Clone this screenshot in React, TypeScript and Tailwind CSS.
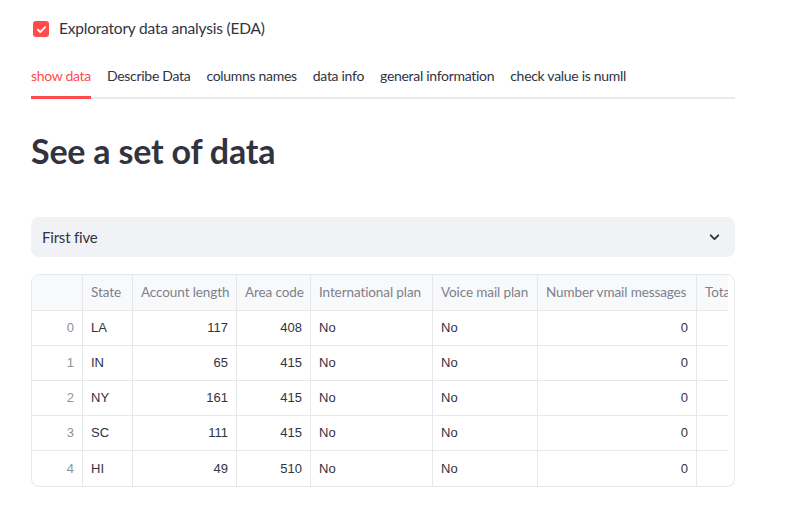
import React from "react";

const cols = [
  { name: "", w: 50, align: "right" },
  { name: "State", w: 50, align: "left" },
  { name: "Account length", w: 104, align: "right" },
  { name: "Area code", w: 74, align: "right" },
  { name: "International plan", w: 122, align: "left" },
  { name: "Voice mail plan", w: 105, align: "left" },
  { name: "Number vmail messages", w: 159, align: "right" },
  { name: "Total day minutes", w: 120, align: "right" },
];

const rows = [
  ["0", "LA", "117", "408", "No", "No", "0", ""],
  ["1", "IN", "65", "415", "No", "No", "0", ""],
  ["2", "NY", "161", "415", "No", "No", "0", ""],
  ["3", "SC", "111", "415", "No", "No", "0", ""],
  ["4", "HI", "49", "510", "No", "No", "0", ""],
];

const tabs = [
  "show data",
  "Describe Data",
  "columns names",
  "data info",
  "general information",
  "check value is numll",
];

export default function App() {
  return (
    <div
      className="w-[787px] h-[522px] bg-white text-[#31333f] overflow-hidden"
      style={{ fontFamily: "Lato, 'Noto Sans', sans-serif" }}
    >
      <div className="ml-[31px] w-[704px] pt-[20px]">
        {/* checkbox */}
        <div className="flex items-center gap-[10px] h-[18px]">
          <div className="ml-[2px] w-[16px] h-[16px] rounded-[3px] bg-[#ff4b4b] flex items-center justify-center">
            <svg width="11" height="11" viewBox="0 0 12 12" fill="none">
              <path d="M2 6.2l2.6 2.6L10 3.4" stroke="white" strokeWidth="2" strokeLinecap="round" strokeLinejoin="round" />
            </svg>
          </div>
          <span className="text-[15.5px] tracking-[-0.2px]">Exploratory data analysis (EDA)</span>
        </div>

        {/* tabs */}
        <div className="mt-[27px] flex gap-[16px] border-b-2 border-[#e9eaee]">
          {tabs.map((t, i) => (
            <div
              key={t}
              className={
                "whitespace-nowrap text-[14px] tracking-[-0.3px] pb-[10px] -mb-[2px] border-b-[3px] " +
                (i === 0 ? "text-[#ff4b4b] border-[#ff4b4b]" : "border-transparent")
              }
            >
              {t}
            </div>
          ))}
        </div>

        {/* heading */}
        <h1 className="mt-[30px] text-[34px] font-bold leading-[44px] tracking-[-0.2px]">See a set of data</h1>

        {/* select */}
        <div className="mt-[44px] h-[40px] rounded-[8px] bg-[#f0f2f6] flex items-center justify-between pl-[11px] pr-[14px]">
          <span className="text-[15px] tracking-[-0.2px]">First five</span>
          <svg width="13" height="13" viewBox="0 0 24 24" fill="none">
            <path d="M5 8l7 7 7-7" stroke="#31333f" strokeWidth="3.5" strokeLinecap="round" strokeLinejoin="round" />
          </svg>
        </div>

        {/* table */}
        <div className="mt-[17px] h-[213px] border border-[#e6e8ec] rounded-[8px] pr-[6px] overflow-hidden">
          <div className="w-full h-full overflow-hidden">
            <div className="flex h-[36px] bg-[#f8f9fb] border-b border-[#e6e8ec] w-max">
              {cols.map((c, i) => (
                <div
                  key={i}
                  className={"shrink-0 whitespace-nowrap overflow-hidden flex items-center px-[8px] text-[13.5px] text-[#7e808a] tracking-[-0.1px] " + (i > 0 ? "border-l border-[#e6e8ec]" : "")}
                  style={{ width: c.w }}
                >
                  {c.name}
                </div>
              ))}
            </div>
            {rows.map((r, ri) => (
              <div key={ri} className={"flex h-[35px] w-max " + (ri < rows.length - 1 ? "border-b border-[#e6e8ec]" : "")}>
                {r.map((v, ci) => (
                  <div
                    key={ci}
                    className={
                      "shrink-0 whitespace-nowrap flex items-center px-[8px] text-[13px] " +
                      (cols[ci].align === "right" ? "justify-end " : "") +
                      (ci > 0 ? "border-l border-[#e6e8ec] " : "") +
                      (ci === 0 ? "text-[#8f919a]" : "text-[#31333f]")
                    }
                    style={{ width: cols[ci].w, fontFamily: "'Liberation Sans', Arial, sans-serif" }}
                  >
                    {v}
                  </div>
                ))}
              </div>
            ))}
          </div>
        </div>
      </div>
    </div>
  );
}
